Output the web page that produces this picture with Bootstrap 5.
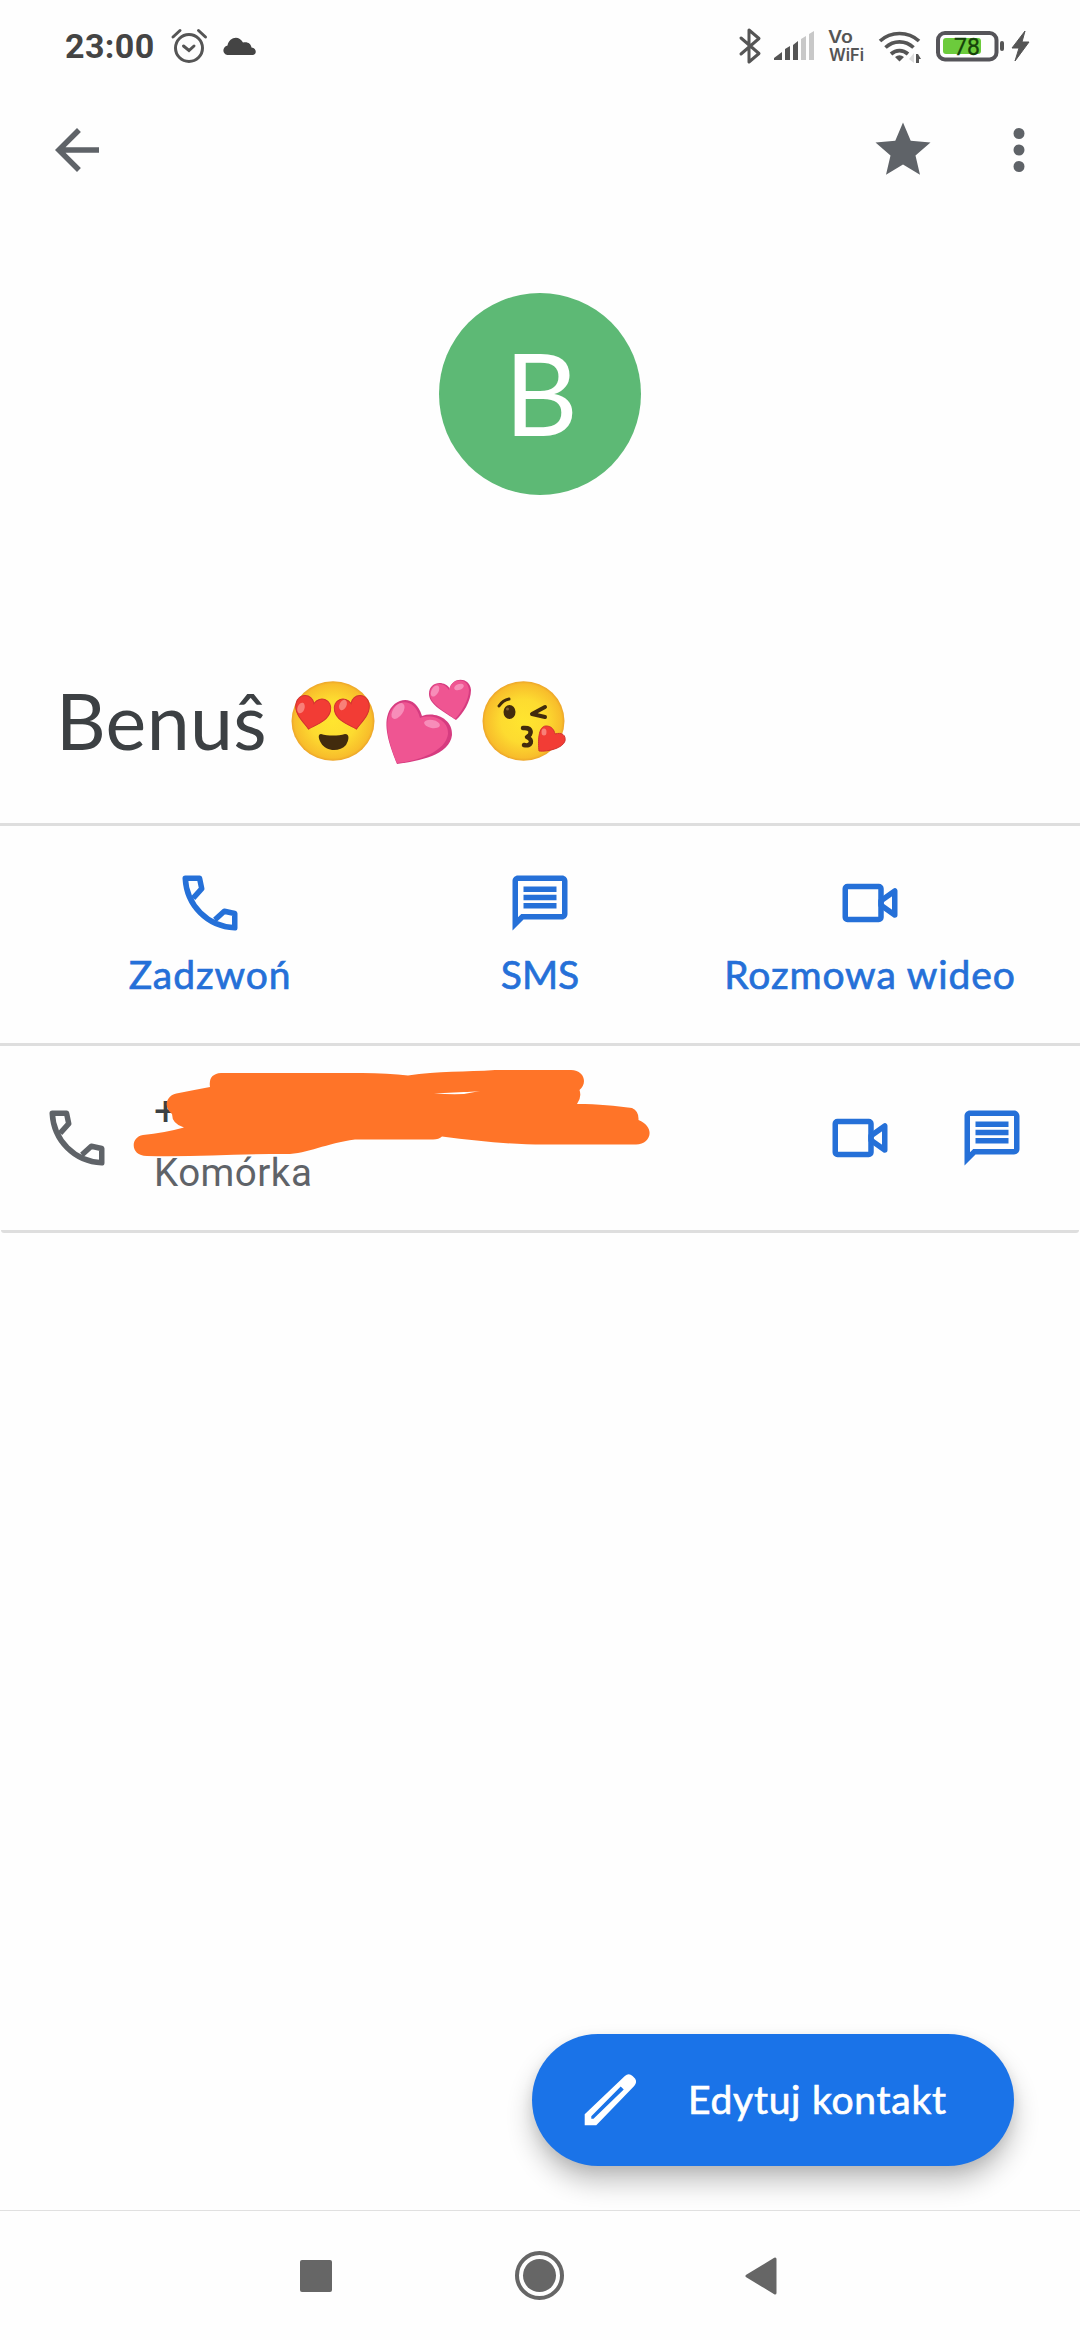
<!DOCTYPE html>
<html lang="pl">
<head>
<meta charset="utf-8">
<meta name="viewport" content="width=device-width, initial-scale=1">
<title>Kontakt</title>
<link href="https://cdn.jsdelivr.net/npm/bootstrap@5.3.0/dist/css/bootstrap.min.css" rel="stylesheet">
<style>
  :root { --blue:#2570d8; --ink:#3c4043; --muted:#5f6368; --line:#dedede; }
  body { font-family:Lato,"Noto Sans",sans-serif; color:var(--ink); background:#fefefe; }
  svg { display:block; flex:none; overflow:visible; }
  .screen { width:1080px; height:2340px; overflow:hidden; }
  .statusbar { height:92px; padding:0 49px 0 65px; font-family:Roboto,sans-serif; color:#444; }
  .clock { font-size:34px; font-weight:700; width:106px; line-height:1; letter-spacing:.4px; }
  .appbar { height:116px; padding:0 28px 0 44px; color:var(--muted); }
  .hero { height:372px; padding-top:85px; }
  .avatar { width:202px; height:202px; background:#5db975; color:#fff; font-size:114px; line-height:1; padding:0 0 4px 2px; }
  .title-row { height:243px; padding:98px 0 0 56px; }
  .title-text { font-size:77px; line-height:84px; width:235px; white-space:nowrap; letter-spacing:.4px; }
  .rule { height:3px; background:var(--line); }
  .actions { height:217px; color:var(--blue); padding:0 45px; }
  .act { width:330px; padding-top:44px; text-decoration:none; color:inherit; white-space:nowrap; }
  .act-label { font-size:39px; line-height:48px; margin-top:14px; letter-spacing:.9px; -webkit-text-stroke:.7px currentColor; }
  .act-sms { letter-spacing:0; }
  .phone-row { height:184px; padding:0 55px 0 44px; position:relative; color:var(--blue); }
  .phone-text { padding:0 0 0 44px; font-family:Roboto,sans-serif; height:184px; }
  .number { font-size:41px; line-height:48px; margin-top:41px; color:var(--ink); }
  .kind { font-size:38.5px; line-height:46px; margin-top:15px; color:var(--muted); letter-spacing:.5px; }
  .scribble { position:absolute; left:0; top:-6px; }
  .endline { border-radius:0 0 4px 4px; margin:0 1px; }
  .blank { height:801px; }
  .fab { width:482px; height:132px; margin-right:66px; padding:0 0 0 45px; background:#1a73e8; border:0; color:#fff; box-shadow:0 16px 26px rgba(0,0,0,.24),0 4px 12px rgba(0,0,0,.08); }
  .fab:hover { background:#1a73e8; }
  .fab-label { font-size:39px; line-height:48px; margin:-2px 0 0 45px; letter-spacing:.75px; -webkit-text-stroke:.7px currentColor; white-space:nowrap; }
  .sysnav { margin-top:44px; height:130px; border-top:1px solid #e0e0e0; padding-left:300px; color:#666; }
</style>
</head>
<body>
<svg width="0" height="0" class="position-absolute" aria-hidden="true">
  <defs>
    <symbol id="call" viewBox="0 0 24 24"><path fill="none" stroke="currentColor" stroke-width="2" stroke-linejoin="round" d="M5.9 10.2 9 6.8 8.2 3H3C3.5 12.9 11.1 20.5 21 21v-5.2l-3.8-.8-3.4 3.1"/></symbol>
    <symbol id="chat" viewBox="0 0 24 24"><path fill="currentColor" d="M4 4h16v12H5.17L4 17.17V4m0-2c-1.1 0-2 .9-2 2v18l4-4h14c1.1 0 2-.9 2-2V4c0-1.1-.9-2-2-2H4zm2 10h12v2H6v-2zm0-3h12v2H6V9zm0-3h12v2H6V6z"/></symbol>
    <symbol id="video" viewBox="0 0 24 24"><g fill="none" stroke="currentColor" stroke-width="2" stroke-linejoin="round"><rect x="3" y="6" width="13" height="12" rx=".8"/><path d="M16 11.2 21 7.6v8.8l-5-3.6z"/></g></symbol>
    <radialGradient id="face"><stop offset="0" stop-color="#ffe52f"/><stop offset=".55" stop-color="#fddb30"/><stop offset=".93" stop-color="#f8bd2b"/><stop offset="1" stop-color="#eca429"/></radialGradient>
    <path id="heart" d="M0 17C-5 12-18 5-18-6c0-12 14-14 18-4C4-20 18-18 18-6 18 5 5 12 0 17z"/>
  </defs>
</svg>
<main class="screen d-flex flex-column">
  <header class="statusbar d-flex align-items-center">
    <span class="clock">23:00</span>
    <svg width="36" height="36" viewBox="0 0 36 36" fill="none" stroke="#555" stroke-width="3"><circle cx="18" cy="20" r="13.5"/><path stroke-linecap="round" d="M12.5 18l5.5 4.500 5-4.500M2 9l7-6.500M27.500 2.500l7 6.500"/></svg>
    <svg class="ms-3" width="33" height="36" viewBox="0 0 33 36"><path fill="#444" d="M4.500 27C-1 26-1 19 4.500 17.500 6 9 16 6.500 20 14.500c5-1 8 1.500 8.500 5 6 1 5 7.500 1 7.500z"/></svg>
    <svg class="ms-auto" width="292" height="36" viewBox="737 28 292 36">
      <path fill="none" stroke="#555" stroke-width="3" stroke-linejoin="round" stroke-linecap="round" d="M739 38l18 15.500-10 8.500V30l10 8.500L739 54"/>
      <path fill="#555" d="M772 60v-2l8-6v8zM783 60V49l5-3v14zM791 60V45l5-4v19z"/>
      <path fill="#c8c8c8" d="M799 60V39l5-3v24zM807 60V34l5-3v29z"/>
      <g fill="none" stroke="#555" stroke-width="3.700"><path d="M878 41c11-10 28-10 39 0M883.500 47.500c8-7.500 20-7.500 28 0M889 54c5-4.500 12-4.500 17 0"/></g>
      <path fill="#555" d="M893 57q4.500-3.500 9 0l-4.500 4.500zM914 63V54h2l3 5h-2v4z"/><path fill="#ddd" d="M907 59l5-6v10z"/>
      <rect x="936" y="33" width="58.500" height="26.500" rx="7" fill="none" stroke="#555459" stroke-width="4"/>
      <rect x="941" y="38" width="38" height="16" rx="3" fill="#6ccb3c"/>
      <rect x="998" y="41" width="4" height="10" rx="2" fill="#555"/>
      <path fill="#555" d="M1023 31l-13 17h7l-4 13 14-19h-7z" stroke="#555"/>
      <g font-family="Roboto,sans-serif"><text x="952" y="55" font-size="23" fill="#15420a" stroke="#15420a" stroke-width=".3" textLength="26">78</text>
      <g fill="#555" font-size="17" font-weight="600" font-family="Inter,sans-serif"><text x="826" y="43" textLength="25" lengthAdjust="spacingAndGlyphs">Vo</text><text x="827" y="60.500" textLength="35" lengthAdjust="spacingAndGlyphs">WiFi</text></g></g>
    </svg>
  </header>
  <nav class="appbar d-flex align-items-center">
    <svg width="66" height="66" viewBox="0 0 24 24"><path fill="currentColor" d="M20 11H7.830l5.590-5.590L12 4l-8 8 8 8 1.410-1.410L7.830 13H20v-2z"/></svg>
    <svg class="ms-auto" width="66" height="66" viewBox="0 0 24 24"><path fill="currentColor" d="M12 17.270 18.180 21l-1.640-7.030L22 9.240l-7.190-.61L12 2 9.190 8.630 2 9.240l5.460 4.730L5.820 21z"/></svg>
    <svg style="margin-left:50px" width="66" height="66" viewBox="0 0 24 24"><path fill="currentColor" d="M12 8a2 2 0 100-4 2 2 0 000 4zm0 2a2 2 0 100 4 2 2 0 000-4zm0 6a2 2 0 100 4 2 2 0 000-4z"/></svg>
  </nav>
  <section class="hero d-flex justify-content-center">
    <div class="avatar rounded-circle d-flex align-items-center justify-content-center">B</div>
  </section>
  <section class="title-row d-flex">
    <div class="title-text">Benuŝ</div>
    <svg width="276" height="90" viewBox="291 678 276 90" aria-label="😍💕😘">
      <ellipse cx="333" cy="721" rx="41.500" ry="39.800" fill="url(#face)"/>
      <g fill="#f23c35" stroke="#cf322f" stroke-width="1"><use href="#heart" transform="translate(312 713) rotate(12) scale(.98 .97)"/><use href="#heart" transform="translate(353 713) rotate(-12) scale(.98 .97)"/></g>
      <g fill="#f88078"><ellipse cx="301" cy="708" rx="3.500" ry="5.500" transform="rotate(20 301 708)"/><ellipse cx="343" cy="705" rx="3.500" ry="5.500" transform="rotate(25 343 705)"/></g>
      <path fill="#422b0d" d="M321 734c7 2 17 2 24 0 5 0 4 6 1 11-6 7-20 7-25-2-3-5-3-9 0-9z"/>
      <path fill="#d63c80" d="M397 764c-6-15-14-36-9-50 5-16 27-22 34 2 14-5 31 4 30 19-2 20-33 26-55 29z"/>
      <path fill="#ef5592" d="M397 763c-6-15-13-35-8-48 5-15 25-20 31 3 14-5 29 3 28 16-2 17-29 27-51 29z"/>
      <path fill="#d63c80" d="M456 720c-10-7-27-15-27-26 0-13 16-14 21-5 1-12 20-13 21 1 0 11-8 24-15 30z"/>
      <path fill="#ef5592" d="M455 719c-9-7-25-15-25-25 0-12 14-13 19-4 2-12 19-13 20 0 0 10-8 23-14 29z"/>
      <g fill="#f78db9"><ellipse cx="398" cy="711" rx="5" ry="9" transform="rotate(35 398 711)"/><ellipse cx="432" cy="724" rx="8" ry="4" transform="rotate(10 432 724)"/><ellipse cx="435" cy="691" rx="3.500" ry="6" transform="rotate(30 435 691)"/><ellipse cx="459" cy="687" rx="5" ry="3" transform="rotate(-20 459 687)"/></g>
      <ellipse cx="523.500" cy="721" rx="41" ry="39.800" fill="url(#face)"/>
      <ellipse cx="509.500" cy="712" rx="6" ry="7" fill="#422b0d"/><circle cx="507.500" cy="709" r="1.500" fill="#7b5b35"/>
      <g fill="none" stroke="#422b0d" stroke-linecap="round" stroke-linejoin="round"><path stroke-width="3" d="M499 706q4-6 10-7"/><path stroke-width="4" d="M545 707l-13 7 13 3"/><path stroke-width="4.500" d="M523 728c10-1 9 7 4 9 7 3 4 10-3 8"/></g>
      <path fill="#f23c35" stroke="#cf322f" d="M539 751c-1-9-1-25 7-25 6 0 8 4 9 8 7-2 11 1 10 7-2 7-17 11-26 10z"/><ellipse cx="544" cy="732" rx="2.500" ry="3.500" fill="#f88078"/>
    </svg>
  </section>
  <div class="rule"></div>
  <section class="actions d-flex">
    <a class="act d-flex flex-column align-items-center"><svg width="66" height="66"><use href="#call"/></svg><span class="act-label">Zadzwoń</span></a>
    <a class="act d-flex flex-column align-items-center"><svg width="66" height="66"><use href="#chat"/></svg><span class="act-label act-sms">SMS</span></a>
    <a class="act d-flex flex-column align-items-center"><svg width="66" height="66"><use href="#video"/></svg><span class="act-label">Rozmowa wideo</span></a>
  </section>
  <div class="rule"></div>
  <section class="phone-row d-flex align-items-center">
    <svg width="66" height="66" color="#5f6368"><use href="#call"/></svg>
    <div class="phone-text"><div class="number">+</div><div class="kind">Komórka</div></div>
    <svg class="ms-auto" width="66" height="66"><use href="#video"/></svg>
    <svg width="66" height="66" style="margin-left:66px"><use href="#chat"/></svg>
    <svg class="scribble" width="700" height="190" viewBox="0 1040 700 190"><path fill="#ff7428" fill-rule="evenodd" d="M210 1087Q208 1074 221 1073H362Q388 1073 408 1075.500C438 1071 466 1072 495 1070H571C584 1070 588 1083 579.500 1090Q582 1097 577 1104C599 1104 615 1106 632 1108Q639 1111 638.500 1120C656 1127 651 1144.500 636 1144.500H545C510 1144.500 478 1141 442 1136.500Q439 1139.500 433 1139.500H355C326 1143 308 1154 286 1154C236 1154 196 1157 147 1156C130 1156 130 1137 143 1135Q164 1133 184 1127.500Q172 1124 172 1114C162 1106 167 1094 179 1093Q194 1090 210 1087zM434 1093.500Q450 1094.500 464 1094L480 1091Q470 1092 464 1092z"/></svg>
  </section>
  <div class="rule endline"></div>
  <div class="blank"></div>
  <div class="d-flex justify-content-end">
    <button class="fab btn rounded-pill d-flex align-items-center">
      <svg width="66" height="66" viewBox="0 0 24 24"><path fill="#fff" fill-rule="evenodd" d="M2.800 21.200V17.200L17.400 3.300Q18.800 2 20.200 3.300L21.100 4.200Q22 5.500 20.800 6.900L7 21.200zM5.200 18.800H6L17 8.200 15.900 7.100 5.200 17.900z"/></svg>
      <span class="fab-label">Edytuj kontakt</span>
    </button>
  </div>
  <footer class="sysnav d-flex align-items-center">
    <svg width="32" height="32"><rect width="32" height="32" rx="2" fill="currentColor"/></svg>
    <svg width="49" height="49" style="margin-left:183px"><circle cx="24.500" cy="24.500" r="22.500" fill="none" stroke="currentColor" stroke-width="4"/><circle cx="24.500" cy="24.500" r="16.500" fill="currentColor"/></svg>
    <svg width="31" height="38" style="margin-left:181px"><path d="M2 19 30 2v34z" fill="currentColor" stroke="currentColor" stroke-width="3" stroke-linejoin="round"/></svg>
  </footer>
</main>
<script src="https://cdn.jsdelivr.net/npm/bootstrap@5.3.0/dist/js/bootstrap.bundle.min.js"></script>
</body>
</html>
